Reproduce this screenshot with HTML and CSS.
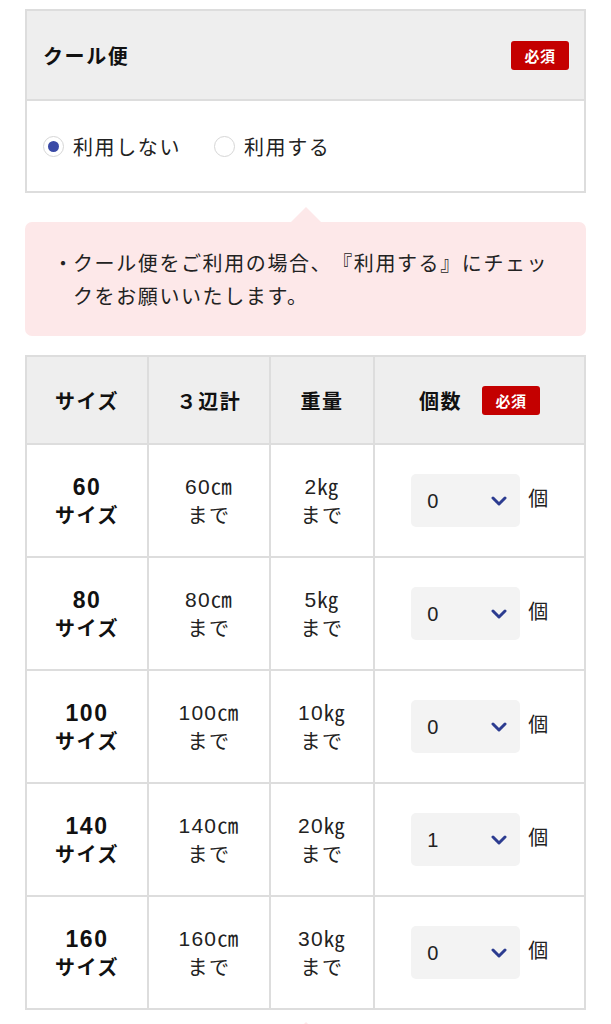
FILE: index.html
```html
<!DOCTYPE html>
<html lang="ja">
<head>
<meta charset="utf-8">
<link rel="stylesheet" href="styles.css">
</head>
<body>
<div class="page">
  <section class="field">
    <div class="field-head">
      <h2 class="field-title">クール便</h2>
      <span class="badge">必須</span>
    </div>
    <div class="field-body">
      <label class="radio"><span class="radio-mark checked"></span><span>利用しない</span></label>
      <label class="radio"><span class="radio-mark"></span><span>利用する</span></label>
    </div>
  </section>

  <div class="notice">
    <div class="notice-item"><span class="bullet">・</span><span>クール便をご利用の場合、『利用する』にチェックをお願いいたします。</span></div>
  </div>

  <table class="sizes">
    <thead>
      <tr>
        <th class="c1">サイズ</th>
        <th class="c2">３辺計</th>
        <th class="c3">重量</th>
        <th class="c4"><span class="qty-head">個数<span class="badge">必須</span></span></th>
      </tr>
    </thead>
    <tbody>
      <tr>
        <td class="size"><b class="num">60</b><b>サイズ</b></td>
        <td><span class="num">60㎝</span><span>まで</span></td>
        <td><span class="num">2㎏</span><span>まで</span></td>
        <td><div class="qty"><div class="select"><span class="num">0</span><svg class="chev" viewBox="0 0 16 10"><path d="M2 2 L8 8 L14 2"/></svg></div><span>個</span></div></td>
      </tr>
      <tr>
        <td class="size"><b class="num">80</b><b>サイズ</b></td>
        <td><span class="num">80㎝</span><span>まで</span></td>
        <td><span class="num">5㎏</span><span>まで</span></td>
        <td><div class="qty"><div class="select"><span class="num">0</span><svg class="chev" viewBox="0 0 16 10"><path d="M2 2 L8 8 L14 2"/></svg></div><span>個</span></div></td>
      </tr>
      <tr>
        <td class="size"><b class="num">100</b><b>サイズ</b></td>
        <td><span class="num">100㎝</span><span>まで</span></td>
        <td><span class="num">10㎏</span><span>まで</span></td>
        <td><div class="qty"><div class="select"><span class="num">0</span><svg class="chev" viewBox="0 0 16 10"><path d="M2 2 L8 8 L14 2"/></svg></div><span>個</span></div></td>
      </tr>
      <tr>
        <td class="size"><b class="num">140</b><b>サイズ</b></td>
        <td><span class="num">140㎝</span><span>まで</span></td>
        <td><span class="num">20㎏</span><span>まで</span></td>
        <td><div class="qty"><div class="select"><span class="num">1</span><svg class="chev" viewBox="0 0 16 10"><path d="M2 2 L8 8 L14 2"/></svg></div><span>個</span></div></td>
      </tr>
      <tr>
        <td class="size"><b class="num">160</b><b>サイズ</b></td>
        <td><span class="num">160㎝</span><span>まで</span></td>
        <td><span class="num">30㎏</span><span>まで</span></td>
        <td><div class="qty"><div class="select"><span class="num">0</span><svg class="chev" viewBox="0 0 16 10"><path d="M2 2 L8 8 L14 2"/></svg></div><span>個</span></div></td>
      </tr>
    </tbody>
  </table>

  <div class="notice notice-next"></div>
</div>
</body>
</html>
```

FILE: styles.css
```css
* { box-sizing: border-box; }
html, body { margin: 0; padding: 0; background: #fff; }
body {
  font-family: "Noto Sans CJK JP", "Noto Sans", sans-serif;
  color: #222;
  font-size: 20px;
  letter-spacing: 1.6px;
  text-spacing-trim: space-all;
}
.page {
  padding: 9px 25px 0 25px;
}
.num {
  font-family: "Liberation Sans", "Noto Sans CJK JP", sans-serif;
  font-size: 21px;
  letter-spacing: 1.2px;
}
.field {
  border: 2px solid #dddddd;
}
.field-head {
  background: #eeeeee;
  height: 90px;
  border-bottom: 2px solid #dddddd;
  display: flex;
  align-items: center;
  justify-content: space-between;
  padding: 0 15px 0 16px;
}
.field-title {
  margin: 0;
  font-size: 20px;
  font-weight: 700;
  color: #111;
}
.badge {
  display: inline-flex;
  align-items: center;
  justify-content: center;
  width: 58px;
  height: 29px;
  background: #c40000;
  color: #fff;
  font-size: 15px;
  font-weight: 700;
  border-radius: 3px;
  letter-spacing: 0.5px;
}
.field-body {
  height: 90px;
  display: flex;
  align-items: center;
  padding: 0 16px;
  gap: 33px;
}
.radio {
  display: flex;
  align-items: center;
  gap: 9px;
}
.radio-mark {
  width: 21px;
  height: 21px;
  border-radius: 50%;
  border: 1.5px solid #d6d6d6;
  background: #fff;
  display: flex;
  align-items: center;
  justify-content: center;
}
.radio-mark.checked::after {
  content: "";
  width: 11px;
  height: 11px;
  border-radius: 50%;
  background: #3a4aa6;
}
.notice {
  position: relative;
  margin-top: 29px;
  background: #fde8e9;
  border-radius: 7px;
  padding: 24px 20px 24px 28px;
  line-height: 33px;
}
.notice::before {
  content: "";
  position: absolute;
  top: -15px;
  left: 50%;
  margin-left: -15px;
  border-left: 15px solid transparent;
  border-right: 15px solid transparent;
  border-bottom: 15px solid #fde8e9;
}
.notice-next {
  margin-top: 27px;
  height: 60px;
}
.notice-item {
  display: flex;
}
.bullet {
  flex: 0 0 auto;
  width: 20px;
  letter-spacing: 0;
}
.sizes {
  margin-top: 19px;
  width: 100%;
  border-collapse: collapse;
  table-layout: fixed;
  text-align: center;
}
.sizes th, .sizes td {
  border: 2px solid #dddddd;
  padding: 0;
}
.sizes th {
  background: #eeeeee;
  height: 88px;
  font-weight: 700;
  color: #111;
}
.c1 { width: 122px; }
.c2 { width: 122px; }
.c3 { width: 104px; }
.qty-head {
  display: inline-flex;
  align-items: center;
  gap: 20px;
}
.sizes td {
  height: 113px;
  line-height: 28px;
}
.sizes td > span, .sizes td > b {
  display: block;
}
.size b { font-weight: 700; color: #111; }
.size b.num { font-size: 23px; letter-spacing: 1.5px; }
.qty {
  display: flex;
  align-items: center;
  justify-content: center;
  gap: 8px;
  margin-left: 2px;
}
.select {
  width: 109px;
  height: 53px;
  background: #f3f3f3;
  border-radius: 5px;
  display: flex;
  align-items: center;
  justify-content: space-between;
  padding: 0 13px 0 16px;
}
.select .num { font-size: 20px; }
.chev {
  width: 16px;
  height: 10px;
  fill: none;
  stroke: #2c3c90;
  stroke-width: 3;
  stroke-linecap: round;
  stroke-linejoin: round;
}
.qty > span { margin-top: -6px; }
```
